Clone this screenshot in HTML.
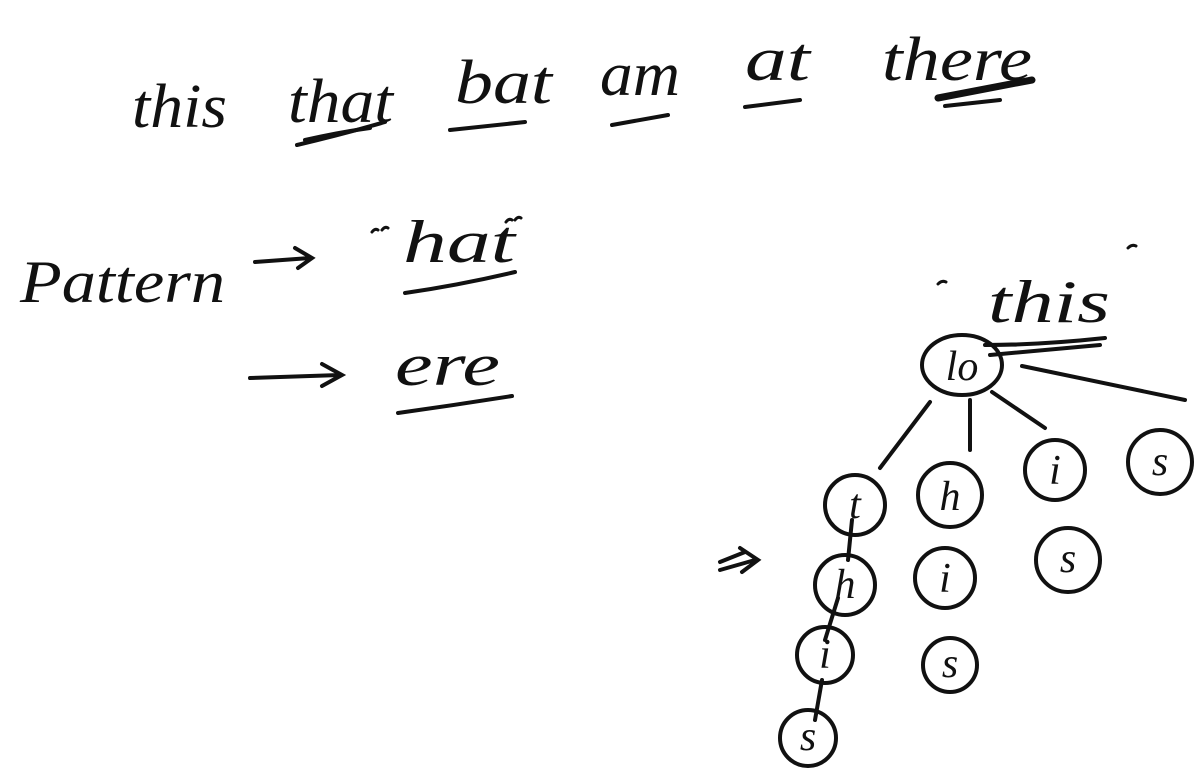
<!DOCTYPE html>
<html><head><meta charset="utf-8"><style>
html,body{margin:0;padding:0;background:#fff;}
svg{display:block}
text{font-family:"Liberation Serif",serif;font-style:italic;fill:#111;}
</style></head><body>
<svg width="1200" height="783" viewBox="0 0 1200 783" xmlns="http://www.w3.org/2000/svg">
<g font-size="62">
<text x="132" y="127" textLength="95" lengthAdjust="spacingAndGlyphs">this</text>
<text x="288" y="122" textLength="105" lengthAdjust="spacingAndGlyphs">that</text>
<text x="455" y="103" textLength="97" lengthAdjust="spacingAndGlyphs">bat</text>
<text x="600" y="95" textLength="80" lengthAdjust="spacingAndGlyphs">am</text>
<text x="745" y="80" textLength="65" lengthAdjust="spacingAndGlyphs">at</text>
<text x="882" y="80" textLength="150" lengthAdjust="spacingAndGlyphs">there</text>
</g>
<g stroke="#111" stroke-width="4" fill="none" stroke-linecap="round">
<path d="M297 145 Q340 135 385 122"/><path d="M305 140 Q340 132 370 128"/>
<path d="M450 130 L525 122"/>
<path d="M612 125 L668 115"/>
<path d="M745 107 L800 100"/>
<path d="M938 98 Q990 88 1032 80" stroke-width="7"/><path d="M945 106 L1000 100"/>
<path d="M405 293 Q460 285 515 272"/>
<path d="M398 413 Q455 405 512 396"/>
<path d="M255 262 L310 258 M295 248 L312 258 L298 268"/>
<path d="M250 378 L340 375 M322 364 L342 375 L322 386"/>
<path d="M372 232 q3 -4 6 -2 M382 230 q3 -4 6 -2 M506 222 q3 -4 6 -2 M515 220 q3 -4 6 -2" stroke-width="3"/>
<path d="M938 284 q4 -4 8 -2 M1128 248 q4 -4 8 -2" stroke-width="3"/>
<ellipse cx="962" cy="365" rx="40" ry="30"/>
<path d="M985 345 Q1040 345 1105 338 M990 355 L1100 345"/>
<path d="M930 402 L880 468 M970 400 L970 450 M992 392 L1045 428 M1022 366 L1185 400"/>
<circle cx="855" cy="505" r="30"/><circle cx="950" cy="495" r="32"/>
<circle cx="1055" cy="470" r="30"/><circle cx="1160" cy="462" r="32"/>
<circle cx="845" cy="585" r="30"/><circle cx="945" cy="578" r="30"/>
<circle cx="1068" cy="560" r="32"/><circle cx="825" cy="655" r="28"/>
<circle cx="950" cy="665" r="27"/><circle cx="808" cy="738" r="28"/>
<path d="M852 520 L848 560 M838 598 L825 640 M822 680 L815 720"/>
<path d="M720 570 L755 560 M720 562 L745 552 M740 548 L758 560 L742 572"/>
</g>
<g font-size="60">
<text x="20" y="302" textLength="205" lengthAdjust="spacingAndGlyphs">Pattern</text>
<text x="403" y="262" textLength="112" lengthAdjust="spacingAndGlyphs">hat</text>
<text x="395" y="385" textLength="105" lengthAdjust="spacingAndGlyphs">ere</text>
<text x="988" y="322" textLength="122" lengthAdjust="spacingAndGlyphs">this</text>
</g>
<g font-size="42" text-anchor="middle">
<text x="962" y="380">lo</text>
<text x="855" y="518">t</text><text x="950" y="510">h</text>
<text x="1055" y="484">i</text><text x="1160" y="475">s</text>
<text x="845" y="598">h</text><text x="945" y="592">i</text>
<text x="1068" y="572">s</text><text x="825" y="668">i</text>
<text x="950" y="677">s</text><text x="808" y="750">s</text>
</g>
</svg>
</body></html>
